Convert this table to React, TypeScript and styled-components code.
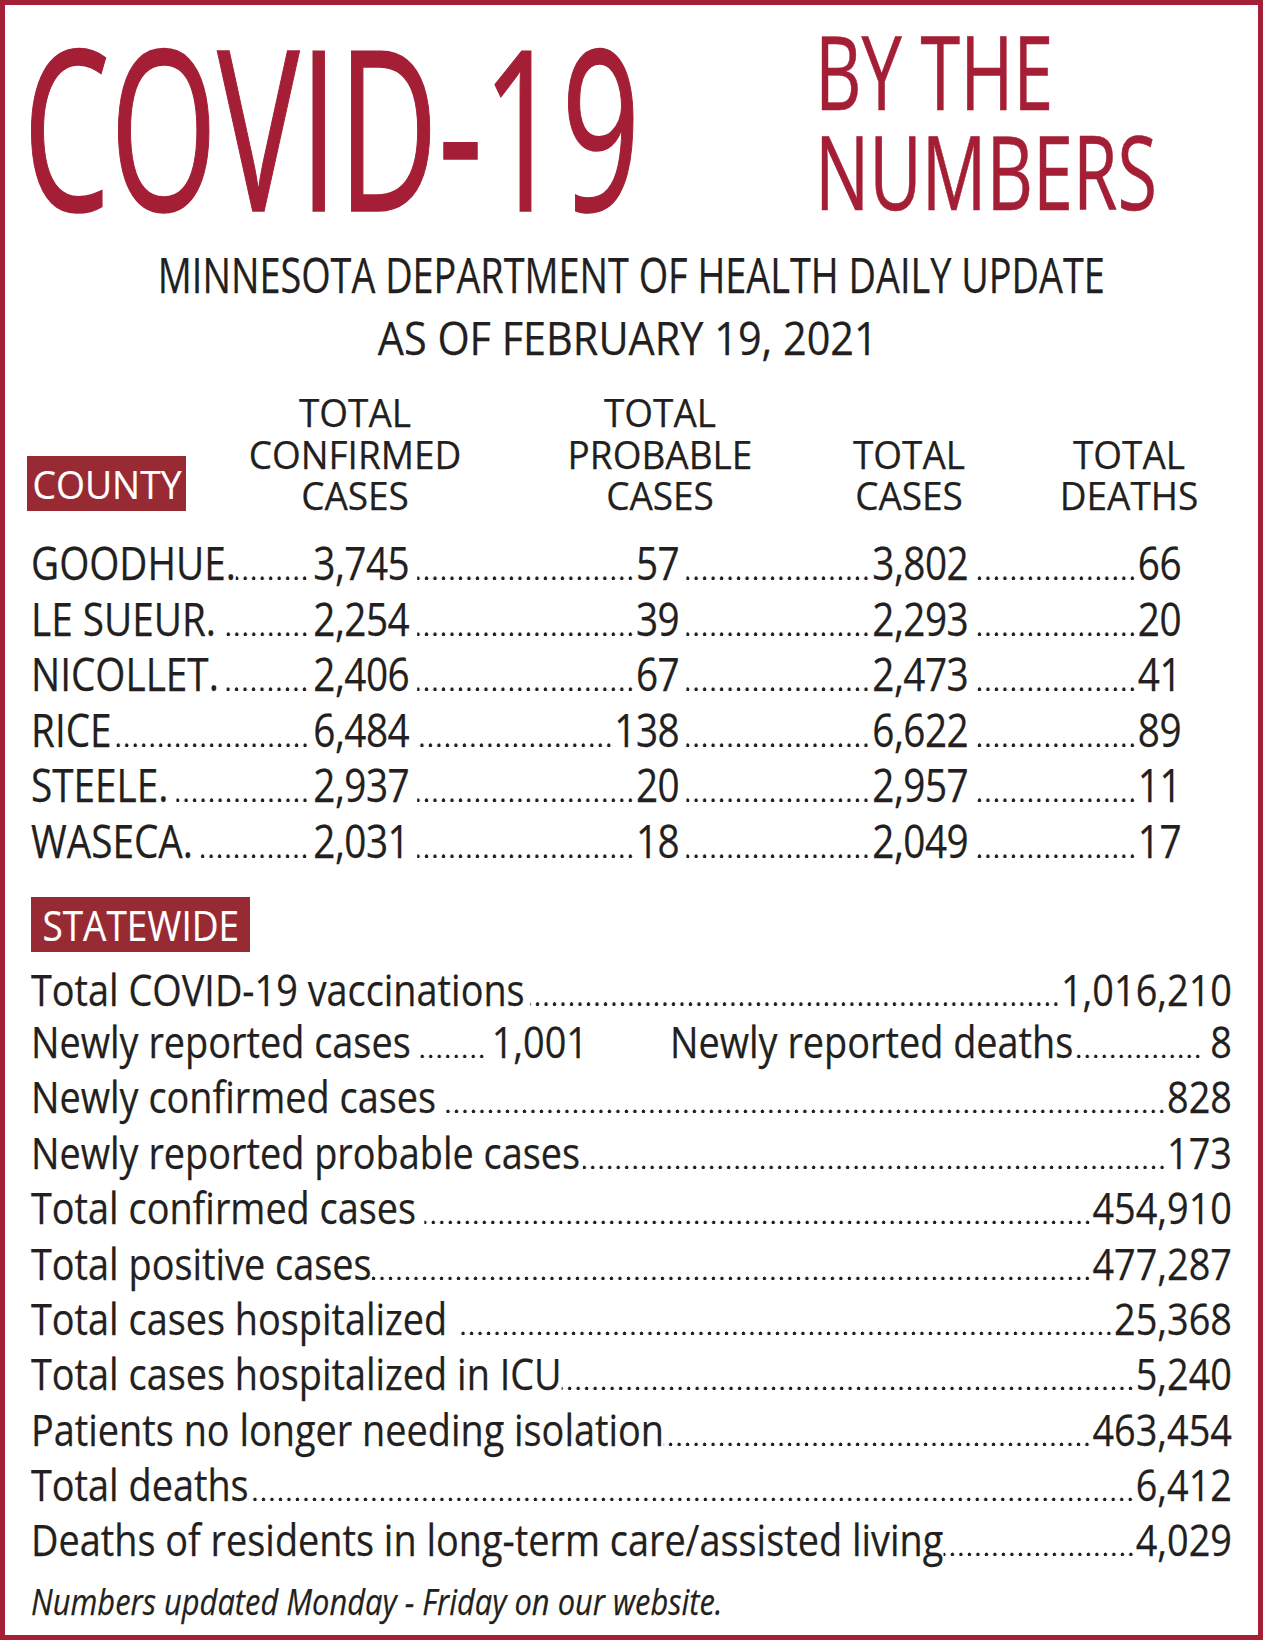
import React from 'react';
import styled, { createGlobalStyle } from 'styled-components';

const RED = '#a41f35';
const BADGE = '#982a33';
const INK = '#231f20';
const FONT = `"Open Sans", "Noto Sans", "DejaVu Sans", sans-serif`;

const DOT_PITCH = 8.5;
const DOT_R = 2.05;

const K_COUNTY = 0.86;
const K_STATE = 0.88;
const COUNTY_F = 45;
const COUNTY_H = 55.6;
const STATE_F = 43;
const STATE_H = 55.4;

const GlobalStyle = createGlobalStyle`
  html, body { margin: 0; padding: 0; background: #ffffff; }
  body { font-family: ${FONT}; color: ${INK}; }
  *, *::before, *::after { box-sizing: border-box; }
`;

const Frame = styled.div`
  width: 1263px;
  height: 1640px;
  border: 5px solid ${RED};
  padding: 0 26px;
  background: #ffffff;
  overflow: hidden;
  display: flex;
  flex-direction: column;
  font-family: ${FONT};
  color: ${INK};
  -webkit-text-stroke: 0.25px ${INK};
`;

const Header = styled.header`
  display: grid;
  grid-template-columns: 784px 1fr;
  align-items: start;
`;

const Title = styled.h1`
  margin: 8px 0 0 -8px;
  font-family: ${FONT};
  font-weight: 400;
  font-size: 224px;
  line-height: 224px;
  color: ${RED};
  white-space: nowrap;
  transform: scaleX(0.616);
  transform-origin: left top;
  -webkit-text-stroke: 1.5px ${RED};
`;

const Kicker = styled.div`
  margin-top: 16px;
  font-size: 102px;
  line-height: 100px;
  color: ${RED};
  white-space: nowrap;
  transform: scaleX(0.706);
  transform-origin: left top;
  -webkit-text-stroke: 0.6px ${RED};
`;

const KickerLine = styled.span`
  display: block;
`;

const Subtitle = styled.div<{ $size: number; $lh: number; $top: number; $shift?: number }>`
  margin-top: ${p => p.$top}px;
  display: flex;
  justify-content: center;
  padding-right: ${p => p.$shift ?? 0}px;
  font-size: ${p => p.$size}px;
  line-height: ${p => p.$lh}px;
  white-space: nowrap;
`;

const SubText = styled.span<{ $k: number }>`
  display: block;
  transform: scaleX(${p => p.$k});
  transform-origin: center top;
`;

const ColHeads = styled.div`
  margin-top: 23px;
  display: grid;
  grid-template-columns: 139px 250px 240px 138px 182px;
  column-gap: 60px;
  align-items: end;
`;

const ColHead = styled.div`
  font-size: 38.5px;
  line-height: 41.7px;
  text-align: center;
  white-space: nowrap;
  transform: scaleX(0.96);
  transform-origin: center top;
`;

const HeadLine = styled.span`
  display: block;
`;

const Badge = styled.div<{ $w: number }>`
  width: ${p => p.$w}px;
  height: 55px;
  flex: none;
  background: ${BADGE};
  color: #ffffff;
  -webkit-text-stroke: 0.2px #ffffff;
  display: flex;
  align-items: center;
  justify-content: center;
`;

const CountyBadge = styled(Badge)`
  margin: 0 0 6px -4px;
  align-self: end;
`;

const StateBadge = styled(Badge)`
  margin-top: 28.3px;
`;

const BadgeText = styled.span<{ $size: number; $k: number }>`
  display: block;
  font-size: ${p => p.$size}px;
  line-height: 55px;
  white-space: nowrap;
  transform: scaleX(${p => p.$k});
`;

const Squeeze = styled.div<{ $k: number; $w: number; $top: number }>`
  flex: none;
  margin-top: ${p => p.$top}px;
  width: ${p => p.$w / p.$k}px;
  transform: scaleX(${p => p.$k});
  transform-origin: left top;
`;

const CountyRow = styled.div`
  display: grid;
  grid-template-columns: ${378 / K_COUNTY}px ${270 / K_COUNTY}px ${289 / K_COUNTY}px ${213 / K_COUNTY}px;
  height: ${COUNTY_H}px;
  font-size: ${COUNTY_F}px;
  line-height: ${COUNTY_H}px;
  white-space: nowrap;
`;

const Cell = styled.div`
  display: flex;
  align-items: stretch;
  min-width: 0;
`;

const CountyNum = styled.span`
  letter-spacing: -0.015em;
`;

const Leader = styled.span<{ $k: number; $y: number; $ml?: number; $mr?: number }>`
  flex: 1 1 auto;
  min-width: 0;
  margin-left: ${p => p.$ml ?? 0}px;
  margin-right: ${p => p.$mr ?? 0}px;
  background-image: radial-gradient(
    ellipse ${p => DOT_R / p.$k}px ${DOT_R}px at 50% ${p => p.$y}px,
    ${INK} 78%,
    rgba(35, 31, 32, 0) 100%
  );
  background-size: ${p => DOT_PITCH / p.$k}px 100%;
  background-repeat: repeat-x;
  background-position: right top;
`;

const StateRow = styled.div<{ $h: number }>`
  display: flex;
  align-items: stretch;
  height: ${p => p.$h}px;
  font-size: ${STATE_F}px;
  line-height: ${p => p.$h}px;
  white-space: nowrap;
`;

const Half = styled.div<{ $w?: number; $ml?: number }>`
  display: flex;
  align-items: stretch;
  flex: ${p => (p.$w ? `0 0 ${p.$w}px` : '1 1 auto')};
  margin-left: ${p => p.$ml ?? 0}px;
  min-width: 0;
`;

const Footnote = styled.p`
  margin: 11px 0 0;
  font-style: italic;
  font-size: 36.5px;
  line-height: 45px;
  white-space: nowrap;
  transform: scaleX(0.845);
  transform-origin: left top;
`;

const counties: { name: string; gap: number; vals: string[] }[] = [
  { name: 'GOODHUE.', gap: 0, vals: ['3,745', '57', '3,802', '66'] },
  { name: 'LE SUEUR.', gap: 9, vals: ['2,254', '39', '2,293', '20'] },
  { name: 'NICOLLET.', gap: 9, vals: ['2,406', '67', '2,473', '41'] },
  { name: 'RICE', gap: 0, vals: ['6,484', '138', '6,622', '89'] },
  { name: 'STEELE.', gap: 9, vals: ['2,937', '20', '2,957', '11'] },
  { name: 'WASECA.', gap: 9, vals: ['2,031', '18', '2,049', '17'] },
];

const statewide: { label: string; value: string; gap: number }[] = [
  { label: 'Total COVID-19 vaccinations', value: '1,016,210', gap: 6 },
  { label: 'Newly confirmed cases', value: '828', gap: 11 },
  { label: 'Newly reported probable cases', value: '173', gap: 3 },
  { label: 'Total confirmed cases', value: '454,910', gap: 9 },
  { label: 'Total positive cases', value: '477,287', gap: 0 },
  { label: 'Total cases hospitalized', value: '25,368', gap: 11 },
  { label: 'Total cases hospitalized in ICU', value: '5,240', gap: 0 },
  { label: 'Patients no longer needing isolation', value: '463,454', gap: 0 },
  { label: 'Total deaths', value: '6,412', gap: 0 },
  { label: 'Deaths of residents in long-term care/assisted living', value: '4,029', gap: 0 },
];

const countyDotY = COUNTY_H / 2 + 0.388 * COUNTY_F - DOT_R;
const stateDotY = (h: number) => h / 2 + 0.388 * STATE_F - DOT_R;

const StateLine: React.FC<{ label: string; value: string; h: number; gap: number }> = ({
  label,
  value,
  h,
  gap,
}) => (
  <StateRow $h={h}>
    <span>{label}</span>
    <Leader $k={K_STATE} $y={stateDotY(h)} $ml={gap} $mr={1} />
    <span>{value}</span>
  </StateRow>
);

export default function App() {
  const [first, ...rest] = statewide;
  return (
    <>
      <GlobalStyle />
      <Frame>
        <Header>
          <Title>COVID-19</Title>
          <Kicker>
            <KickerLine>BY THE</KickerLine>
            <KickerLine>NUMBERS</KickerLine>
          </Kicker>
        </Header>

        <Subtitle $size={49} $lh={62} $top={6}>
          <SubText $k={0.772}>MINNESOTA DEPARTMENT OF HEALTH DAILY UPDATE</SubText>
        </Subtitle>
        <Subtitle $size={46} $lh={64} $top={0} $shift={8}>
          <SubText $k={0.9}>AS OF FEBRUARY 19, 2021</SubText>
        </Subtitle>

        <ColHeads>
          <CountyBadge $w={159}>
            <BadgeText $size={39} $k={0.955}>COUNTY</BadgeText>
          </CountyBadge>
          <ColHead>
            <HeadLine>TOTAL</HeadLine>
            <HeadLine>CONFIRMED</HeadLine>
            <HeadLine>CASES</HeadLine>
          </ColHead>
          <ColHead>
            <HeadLine>TOTAL</HeadLine>
            <HeadLine>PROBABLE</HeadLine>
            <HeadLine>CASES</HeadLine>
          </ColHead>
          <ColHead>
            <HeadLine>TOTAL</HeadLine>
            <HeadLine>CASES</HeadLine>
          </ColHead>
          <ColHead>
            <HeadLine>TOTAL</HeadLine>
            <HeadLine>DEATHS</HeadLine>
          </ColHead>
        </ColHeads>

        <Squeeze $k={K_COUNTY} $w={1150} $top={18}>
          {counties.map(c => (
            <CountyRow key={c.name}>
              <Cell>
                <span>{c.name}</span>
                <Leader $k={K_COUNTY} $y={countyDotY} $ml={c.gap} $mr={5} />
                <CountyNum>{c.vals[0]}</CountyNum>
              </Cell>
              {c.vals.slice(1).map((v, i) => (
                <Cell key={i}>
                  <Leader $k={K_COUNTY} $y={countyDotY} $ml={9} $mr={2} />
                  <CountyNum>{v}</CountyNum>
                </Cell>
              ))}
            </CountyRow>
          ))}
        </Squeeze>

        <StateBadge $w={219}>
          <BadgeText $size={42} $k={0.88}>STATEWIDE</BadgeText>
        </StateBadge>

        <Squeeze $k={K_STATE} $w={1201} $top={13}>
          <StateLine label={first.label} value={first.value} h={49} gap={first.gap} />
          <StateRow $h={STATE_H}>
            <Half $w={557 / K_STATE}>
              <span>Newly reported cases</span>
              <Leader $k={K_STATE} $y={stateDotY(STATE_H)} $ml={8} $mr={6} />
              <span>1,001</span>
            </Half>
            <Half $ml={82 / K_STATE}>
              <span>Newly reported deaths</span>
              <Leader $k={K_STATE} $y={stateDotY(STATE_H)} $ml={1} $mr={10} />
              <span>8</span>
            </Half>
          </StateRow>
          {rest.map(r => (
            <StateLine key={r.label} label={r.label} value={r.value} h={STATE_H} gap={r.gap} />
          ))}
        </Squeeze>

        <Footnote>Numbers updated Monday - Friday on our website.</Footnote>
      </Frame>
    </>
  );
}
